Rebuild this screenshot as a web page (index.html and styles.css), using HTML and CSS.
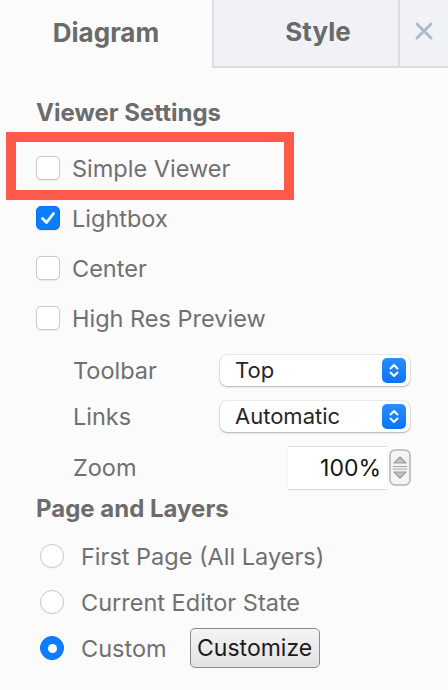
FILE: index.html
```html
<!DOCTYPE html>
<html lang="en">
<head>
    <meta charset="UTF-8">
    <meta name="viewport" content="width=device-width, initial-scale=1.0">
    <title>Format Panel</title>
    <link rel="stylesheet" href="styles.css">
</head>
<body>
    <!-- Tabs -->
    <div class="tabs">
        <div class="tab active">Diagram</div>
        <div class="tab style-tab">Style</div>
        <div class="tab close-tab">
            <svg width="18" height="18" viewBox="0 0 18 18">
                <path d="M2 2 L16 16 M16 2 L2 16" stroke="#a9bbd3" stroke-width="3" stroke-linecap="round"/>
            </svg>
        </div>
    </div>

    <div class="panel">
        <div class="section-title">Viewer Settings</div>

        <div class="check-row highlight">
            <span class="checkbox"></span>
            <span class="label">Simple Viewer</span>
        </div>
        <div class="check-row">
            <span class="checkbox checked">
                <svg width="24" height="24" viewBox="0 0 24 24">
                    <path d="M6.5 12.5 L10.5 16.5 L17.5 7.5" fill="none" stroke="#fff" stroke-width="2.8" stroke-linecap="round" stroke-linejoin="round"/>
                </svg>
            </span>
            <span class="label">Lightbox</span>
        </div>
        <div class="check-row">
            <span class="checkbox"></span>
            <span class="label">Center</span>
        </div>
        <div class="check-row">
            <span class="checkbox"></span>
            <span class="label">High Res Preview</span>
        </div>

        <div class="option-row first">
            <span class="option-label">Toolbar</span>
            <div class="select">
                <span>Top</span>
                <span class="select-arrows">
                    <svg width="24" height="25" viewBox="0 0 24 25">
                        <path d="M8.5 10.5 L12 7 L15.5 10.5 M8.5 14.5 L12 18 L15.5 14.5" fill="none" stroke="#fff" stroke-width="2" stroke-linecap="round" stroke-linejoin="round"/>
                    </svg>
                </span>
            </div>
        </div>
        <div class="option-row">
            <span class="option-label">Links</span>
            <div class="select">
                <span>Automatic</span>
                <span class="select-arrows">
                    <svg width="24" height="25" viewBox="0 0 24 25">
                        <path d="M8.5 10.5 L12 7 L15.5 10.5 M8.5 14.5 L12 18 L15.5 14.5" fill="none" stroke="#fff" stroke-width="2" stroke-linecap="round" stroke-linejoin="round"/>
                    </svg>
                </span>
            </div>
        </div>
        <div class="option-row zoom-row">
            <span class="option-label">Zoom</span>
            <div class="zoom-input">100%</div>
            <span class="stepper">
                <svg width="22" height="37" viewBox="0 0 22 37">
                    <rect x="1" y="1" width="20" height="35" rx="5" fill="#f4f4f4" stroke="#b4b4b4" stroke-width="1.5"/>
                    <path d="M5 14 L11 8 L17 14 Z" fill="#c4c4c4" stroke="#9a9a9a" stroke-width="1.2" stroke-linejoin="round"/>
                    <path d="M4 17.5 H18 M4 20 H18" stroke="#a8a8a8" stroke-width="1.2"/>
                    <path d="M5 23 L11 29 L17 23 Z" fill="#c4c4c4" stroke="#9a9a9a" stroke-width="1.2" stroke-linejoin="round"/>
                </svg>
            </span>
        </div>

        <div class="section-title second">Page and Layers</div>

        <div class="radio-row">
            <span class="radio"></span>
            <span class="label">First Page (All Layers)</span>
        </div>
        <div class="radio-row">
            <span class="radio"></span>
            <span class="label">Current Editor State</span>
        </div>
        <div class="radio-row">
            <span class="radio selected"></span>
            <span class="label">Custom</span>
            <button class="customize">Customize</button>
        </div>
    </div>
</body>
</html>
```

FILE: styles.css
```css
* {
    margin: 0;
    padding: 0;
    box-sizing: border-box;
}

body {
    background: #fbfbfb;
    font-family: 'Inter', 'Liberation Sans', sans-serif;
    color: #6f6f6f;
    width: 448px;
    height: 690px;
    overflow: hidden;
}

/* Tabs */
.tabs {
    display: flex;
    height: 68px;
}

.tab {
    display: flex;
    align-items: center;
    justify-content: center;
    font-size: 26px;
    font-weight: 700;
    color: #6a6a6a;
    padding-bottom: 3px;
}

.tab.active {
    width: 212px;
}

.style-tab {
    width: 186px;
    padding-left: 24px;
    background: #f1f2f5;
    border-left: 2px solid #dcdde1;
    border-bottom: 2px solid #dcdde1;
}

.close-tab {
    flex: 1;
    background: #f1f2f5;
    border-left: 2px solid #dcdde1;
    border-bottom: 2px solid #dcdde1;
    padding-bottom: 4px;
}

/* Panel */
.panel {
    padding-left: 36px;
}

.section-title {
    font-size: 24px;
    font-weight: 700;
    color: #6c6c6c;
    height: 30px;
    line-height: 30px;
    margin-top: 30px;
    margin-bottom: 15px;
}

.section-title.second {
    margin-top: 4px;
    margin-bottom: 9px;
}

.label {
    font-size: 23.5px;
    color: #707070;
}

.check-row {
    display: flex;
    align-items: center;
    height: 50px;
}

.check-row.highlight {
    position: relative;
}

/* red annotation box */
.check-row.highlight::before {
    content: "";
    position: absolute;
    left: -30px;
    top: -11px;
    width: 288px;
    height: 68px;
    box-sizing: border-box;
    border: 10px solid #fe5a4c;
}

.checkbox {
    width: 24px;
    height: 24px;
    border-radius: 5px;
    background: #fff;
    border: 1px solid #cbcbcb;
    box-shadow: 0 0.5px 1px rgba(0, 0, 0, 0.08);
    margin-right: 12px;
    display: flex;
}

.checkbox.checked {
    background: #0b7dff;
    border-color: #0b73ee;
}

.checkbox.checked svg {
    margin: -1px;
}

/* Options */
.option-row {
    display: flex;
    align-items: center;
    height: 46px;
    padding-left: 37px;
}

.option-row.first {
    margin-top: 4px;
}

.option-label {
    font-size: 23.5px;
    color: #707070;
    width: 147px;
}

.select {
    width: 190px;
    height: 31px;
    background: #fff;
    border-radius: 7px;
    box-shadow: 0 0 0 0.5px rgba(0, 0, 0, 0.12), 0 1px 2px rgba(0, 0, 0, 0.25);
    display: flex;
    align-items: center;
    justify-content: space-between;
    padding: 0 4px 0 15px;
    font-size: 22px;
    color: #262626;
}

.select-arrows {
    width: 24px;
    height: 25px;
    border-radius: 5px;
    background: linear-gradient(#2a8dff, #0a74f8);
    display: flex;
}

.zoom-row {
    margin-top: 5px;
}

.zoom-row .option-label {
    width: 215px;
}

.zoom-input {
    width: 99px;
    height: 43px;
    background: #fff;
    border-top: 1px solid #dedede;
    box-shadow: 0 1px 1px rgba(0, 0, 0, 0.12);
    font-size: 23px;
    color: #151515;
    text-align: right;
    line-height: 42px;
    padding-right: 6px;
}

.stepper {
    display: flex;
    margin-left: 2px;
}

/* Radios */
.radio-row {
    display: flex;
    align-items: center;
    height: 46px;
    padding-left: 4px;
}

.radio {
    width: 24px;
    height: 24px;
    border-radius: 50%;
    background: #fff;
    border: 1px solid #cbcbcb;
    box-shadow: 0 0.5px 1px rgba(0, 0, 0, 0.08);
    margin-right: 17px;
    display: flex;
    align-items: center;
    justify-content: center;
}

.radio.selected {
    background: #0b7dff;
    border-color: #0b73ee;
}

.radio.selected::after {
    content: "";
    width: 9px;
    height: 9px;
    border-radius: 50%;
    background: #fff;
}

.customize {
    margin-left: 23px;
    width: 130px;
    height: 40px;
    border: 1.5px solid #8c8c8c;
    border-radius: 5px;
    background: linear-gradient(#f4f4f4, #e2e2e2);
    font-family: 'Inter', 'Liberation Sans', sans-serif;
    font-size: 23px;
    color: #1c1c1c;
}
```
